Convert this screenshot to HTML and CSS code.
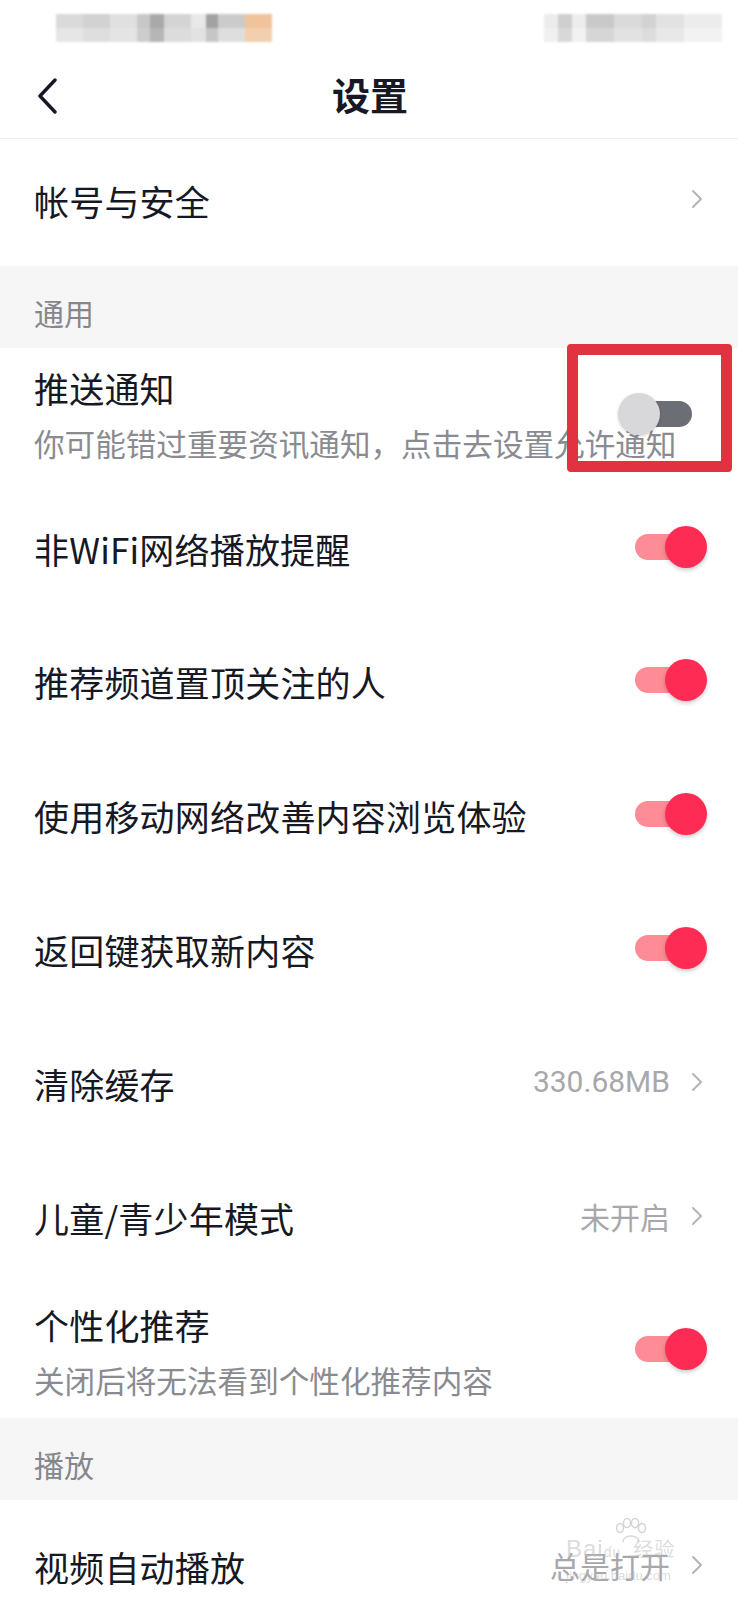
FILE: index.html
```html
<!DOCTYPE html>
<html lang="zh-CN">
<head>
<meta charset="utf-8">
<title>设置</title>
<link rel="stylesheet" href="styles.css">
</head>
<body>
<div class="screen">
  <div class="status">
    <div class="blur blur-left"></div>
    <div class="blur blur-right"></div>
  </div>
  <header class="nav">
    <svg class="back" width="22" height="36" viewBox="0 0 22 36"><path d="M18 2 L3 18 L18 34" fill="none" stroke="#161823" stroke-width="3.4" stroke-linecap="round" stroke-linejoin="round"/></svg>
    <h1 class="nav-title">设置</h1>
  </header>

  <div class="row row-first">
    <span class="title">帐号与安全</span>
    <span class="aux"><svg class="chev" width="12" height="20" viewBox="0 0 12 20"><path d="M2 2 L10 10 L2 18" fill="none" stroke="#b4b4b8" stroke-width="2" stroke-linecap="round" stroke-linejoin="round"/></svg></span>
  </div>

  <div class="sec-head">通用</div>

  <div class="row">
    <div class="txt">
      <div class="title">推送通知</div>
      <div class="sub">你可能错过重要资讯通知，点击去设置允许通知</div>
    </div>
    <span class="switch off"><span class="knob"></span></span>
  </div>
  <div class="row">
    <span class="title">非WiFi网络播放提醒</span>
    <span class="switch on"><span class="knob"></span></span>
  </div>
  <div class="row">
    <span class="title">推荐频道置顶关注的人</span>
    <span class="switch on"><span class="knob"></span></span>
  </div>
  <div class="row">
    <span class="title">使用移动网络改善内容浏览体验</span>
    <span class="switch on"><span class="knob"></span></span>
  </div>
  <div class="row">
    <span class="title">返回键获取新内容</span>
    <span class="switch on"><span class="knob"></span></span>
  </div>
  <div class="row">
    <span class="title">清除缓存</span>
    <span class="aux"><span class="value num">330.68MB</span><svg class="chev" width="12" height="20" viewBox="0 0 12 20"><path d="M2 2 L10 10 L2 18" fill="none" stroke="#b4b4b8" stroke-width="2" stroke-linecap="round" stroke-linejoin="round"/></svg></span>
  </div>
  <div class="row">
    <span class="title">儿童/青少年模式</span>
    <span class="aux"><span class="value">未开启</span><svg class="chev" width="12" height="20" viewBox="0 0 12 20"><path d="M2 2 L10 10 L2 18" fill="none" stroke="#b4b4b8" stroke-width="2" stroke-linecap="round" stroke-linejoin="round"/></svg></span>
  </div>
  <div class="row">
    <div class="txt">
      <div class="title">个性化推荐</div>
      <div class="sub">关闭后将无法看到个性化推荐内容</div>
    </div>
    <span class="switch on"><span class="knob"></span></span>
  </div>

  <div class="sec-head">播放</div>

  <div class="row">
    <span class="title">视频自动播放</span>
    <span class="aux"><span class="value">总是打开</span><svg class="chev" width="12" height="20" viewBox="0 0 12 20"><path d="M2 2 L10 10 L2 18" fill="none" stroke="#b4b4b8" stroke-width="2" stroke-linecap="round" stroke-linejoin="round"/></svg></span>
  </div>

  <div class="highlight"></div>
  <div class="watermark">
    <svg class="paw" width="34" height="26" viewBox="0 0 34 26"><g fill="none" stroke="rgba(180,180,180,0.55)" stroke-width="1.5"><ellipse cx="6" cy="10" rx="3.5" ry="4.5"/><ellipse cx="13" cy="5" rx="3.5" ry="4.5"/><ellipse cx="21" cy="5" rx="3.5" ry="4.5"/><ellipse cx="28" cy="10" rx="3.5" ry="4.5"/><path d="M9 24 C9 16 25 16 25 24"/></g></svg>
    <span class="wm-big">Bai<span class="wm-du">du</span><span class="wm-cn">经验</span></span>
    <span class="wm-small">jingyan.baidu.com</span>
  </div>
</div>
</body>
</html>
```

FILE: styles.css
```css
html, body {
  margin: 0;
  padding: 0;
  background: #ffffff;
}
body {
  font-family: "Noto Sans CJK SC", "Noto Sans", sans-serif;
  color: #161823;
}
.screen {
  position: relative;
  width: 738px;
  min-height: 1600px;
  overflow: hidden;
}

/* status bar (pixelated / blurred) */
.status {
  height: 58px;
  display: flex;
  justify-content: space-between;
  align-items: flex-start;
  padding: 14px 16px 0 56px;
  box-sizing: border-box;
}
.blur {
  height: 28px;
  filter: blur(1.2px);
}
.blur-left {
  width: 216px;
  background:
    linear-gradient(90deg, #dadada 0 27px, #d2d2d2 27px 54px, #e0e0e0 54px 81px, #c8c8c8 81px 94px, #a9a9a9 94px 108px, #d4d4d4 108px 135px, #e8e8e8 135px 150px, #a2a2a2 150px 162px, #cbcbcb 162px 189px, #f0c39a 189px 216px) top / 100% 14px no-repeat,
    linear-gradient(90deg, #e6e6e6 0 27px, #dedede 27px 54px, #e4e4e4 54px 81px, #cdcdcd 81px 94px, #b6b6b6 94px 108px, #dcdcdc 108px 135px, #e2e2e2 135px 150px, #c6c6c6 150px 162px, #dedede 162px 189px, #f2cfae 189px 216px) bottom / 100% 14px no-repeat;
}
.blur-right {
  width: 178px;
  background:
    linear-gradient(90deg, #ececec 0 14px, #cfcfcf 14px 28px, #ededed 28px 42px, #c9c9c9 42px 70px, #dadada 70px 98px, #d2d2d2 98px 112px, #e2e2e2 112px 140px, #ececec 140px 178px) top / 100% 14px no-repeat,
    linear-gradient(90deg, #f0f0f0 0 14px, #d8d8d8 14px 28px, #f2f2f2 28px 42px, #d6d6d6 42px 70px, #e2e2e2 70px 98px, #dcdcdc 98px 112px, #e8e8e8 112px 140px, #f2f2f2 140px 178px) bottom / 100% 14px no-repeat;
}

/* nav bar */
.nav {
  height: 80px;
  border-bottom: 1px solid #ececec;
  display: flex;
  align-items: center;
  justify-content: center;
  position: relative;
}
.back {
  position: absolute;
  left: 37px;
  top: 20px;
}
.nav-title {
  margin: 0;
  font-size: 38px;
  font-weight: 700;
  line-height: 50px;
  color: #161823;
  padding-left: 2px;
  padding-bottom: 8px;
}

/* rows */
.row {
  height: 133.8px;
  box-sizing: border-box;
  padding: 0 36px 0 34px;
  display: flex;
  align-items: center;
  justify-content: space-between;
}
.row-first {
  height: 127px;
  padding-bottom: 4px;
}
.title {
  font-size: 35px;
  line-height: 46px;
  font-weight: 400;
  color: #161823;
  letter-spacing: 0.2px;
  white-space: nowrap;
}
.txt {
  display: flex;
  flex-direction: column;
  gap: 9px;
  padding-top: 2px;
  flex: 1 1 auto;
  min-width: 0;
  white-space: nowrap;
}
.sub {
  font-size: 30.6px;
  line-height: 46px;
  color: #8a8b91;
  white-space: nowrap;
}
.aux {
  display: flex;
  align-items: center;
  gap: 21px;
  padding-bottom: 4px;
  flex: none;
}
.chev {
  display: block;
  margin-right: -1px;
}
.value {
  font-size: 30px;
  line-height: 40px;
  color: #a8a8ac;
}
.value.num {
  font-family: Roboto, "Noto Sans", sans-serif;
}

/* section headers */
.sec-head {
  height: 82px;
  box-sizing: border-box;
  padding: 26px 34px 0;
  background: #f6f6f6;
  font-size: 30px;
  line-height: 40px;
  color: #86878c;
}

/* switches */
.switch {
  position: relative;
  width: 56px;
  height: 26px;
  border-radius: 13px;
  margin-right: 11px;
  margin-bottom: 4px;
  flex: none;
}
.switch .knob {
  position: absolute;
  top: -8px;
  width: 42px;
  height: 42px;
  border-radius: 50%;
}
.switch.on {
  background: #fe8c96;
}
.switch.on .knob {
  left: 30px;
  background: #fe2c55;
  box-shadow: 0 2px 4px rgba(0, 0, 0, 0.22);
}
.switch.off {
  background: #6b6e74;
  margin-right: 10px;
  margin-bottom: 2px;
}
.switch.off .knob {
  left: -18px;
  background: #d8d8da;
  box-shadow: 0 1px 3px rgba(0, 0, 0, 0.18);
}

/* red annotation frame */
.highlight {
  position: absolute;
  left: 567px;
  top: 344px;
  width: 165px;
  height: 128px;
  box-sizing: border-box;
  border: 11px solid #e1323f;
  border-radius: 4px;
}

/* baidu watermark */
.watermark {
  position: absolute;
  left: 566px;
  top: 1518px;
  width: 140px;
  display: flex;
  flex-direction: column;
  align-items: flex-start;
  color: rgba(185, 185, 185, 0.5);
  pointer-events: none;
}
.paw {
  margin-left: 48px;
  display: block;
}
.wm-big {
  font-family: "Liberation Sans", sans-serif;
  font-size: 24px;
  line-height: 22px;
  letter-spacing: 1px;
  margin-top: -6px;
}
.wm-du {
  font-size: 14px;
  margin-right: 12px;
}
.wm-cn {
  font-family: "Noto Sans CJK SC", sans-serif;
  font-size: 20px;
}
.wm-small {
  font-family: "Liberation Sans", sans-serif;
  font-size: 13px;
  line-height: 14px;
  margin-top: 6px;
}
```
